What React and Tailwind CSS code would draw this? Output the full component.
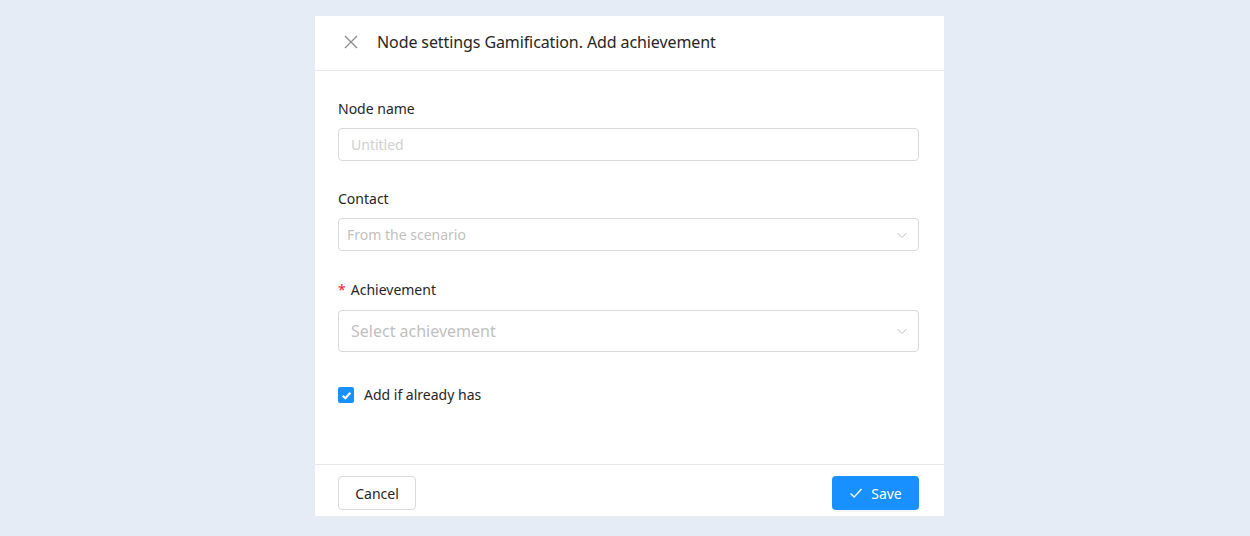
import React, { useState } from "react";

const font = { fontFamily: '"Segoe UI", "Noto Sans", "Open Sans", sans-serif' };

const Chevron = () => (
  <svg width="12" height="12" viewBox="0 0 12 12" fill="none" stroke="#bfbfbf" strokeWidth="1">
    <path d="M1.5 4 L6 8.5 L10.5 4" />
  </svg>
);

const App = () => {
  const [checked, setChecked] = useState(true);

  return (
    <div className="w-[1250px] h-[536px] bg-[#e5ecf6] flex pl-[315px] pt-4" style={font}>
      <div className="w-[629px] h-[500px] bg-white flex flex-col">
        {/* header */}
        <div className="h-[55px] border-b border-[#e8e8e8] flex items-center pl-[28px] pb-[2px] shrink-0">
          <button className="w-[16px] h-[16px] flex items-center justify-center text-[#8c8c8c]">
            <svg width="14" height="14" viewBox="0 0 14 14" stroke="currentColor" strokeWidth="1.3">
              <path d="M1 1 L13 13 M13 1 L1 13" />
            </svg>
          </button>
          <h1 className="ml-[18px] text-[16px] text-[#262626] leading-6 tracking-[-0.1px]">
            Node settings Gamification. Add achievement
          </h1>
        </div>

        {/* form */}
        <div className="flex-1 pl-[23px] pr-[25px] pt-[27px]">
          <label className="block text-[14px] leading-[22px] text-[#262626]">Node name</label>
          <input
            placeholder="Untitled"
            className="mt-[8px] w-[581px] h-[33px] border border-[#d9d9d9] rounded px-3 text-[14px] placeholder:text-[#d0d0d0] outline-none"
          />

          <label className="block mt-[27px] text-[14px] leading-[22px] text-[#262626]">Contact</label>
          <div className="mt-[8px] w-[581px] h-[33px] border border-[#d9d9d9] rounded flex items-center justify-between pl-2 pr-[10px]">
            <span className="text-[14px] text-[#bfbfbf]">From the scenario</span>
            <Chevron />
          </div>

          <label className="block mt-[28px] text-[14px] leading-[22px] text-[#262626]">
            <span className="text-[#f5222d] mr-[5px]">*</span>Achievement
          </label>
          <div className="mt-[9px] w-[581px] h-[42px] border border-[#d9d9d9] rounded flex items-center justify-between pl-3 pr-[10px]">
            <span className="text-[16px] text-[#bfbfbf]">Select achievement</span>
            <Chevron />
          </div>

          <label
            className="mt-[32px] flex items-center gap-[10px] cursor-pointer select-none w-fit"
            onClick={() => setChecked(!checked)}
          >
            <span
              className={`w-[16px] h-[16px] rounded-[2px] flex items-center justify-center ${
                checked ? "bg-[#1890ff]" : "border border-[#d9d9d9] bg-white"
              }`}
            >
              {checked && (
                <svg width="11" height="11" viewBox="0 0 10 10" fill="none" stroke="white" strokeWidth="2">
                  <path d="M1.5 5.2 L4 7.5 L8.5 2.5" />
                </svg>
              )}
            </span>
            <span className="text-[14px] leading-[22px] text-[#262626]">Add if already has</span>
          </label>
        </div>

        {/* footer */}
        <div className="h-[52px] border-t border-[#e8e8e8] flex items-start justify-between pl-[23px] pr-[25px] pt-[11px] shrink-0">
          <button className="h-[34px] w-[78px] border border-[#d9d9d9] rounded text-[14px] text-[#262626] bg-white">
            Cancel
          </button>
          <button className="h-[34px] w-[87px] rounded bg-[#1890ff] text-white text-[14px] flex items-center justify-center gap-[8px] shadow-[0_2px_0_rgba(0,0,0,0.045)]">
            <svg width="14" height="14" viewBox="0 0 14 14" fill="none" stroke="white" strokeWidth="1.3">
              <path d="M1.5 7.5 L5.2 11 L12.5 3" />
            </svg>
            Save
          </button>
        </div>
      </div>
    </div>
  );
};

export default App;
